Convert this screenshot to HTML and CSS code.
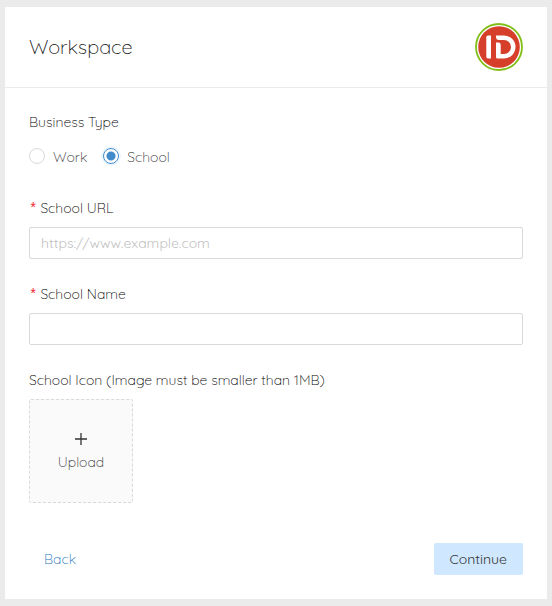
FILE: index.html
```html
<!DOCTYPE html>
<html lang="en">
<head>
<meta charset="utf-8">
<meta name="viewport" content="width=device-width, initial-scale=1">
<title>Workspace</title>
<link rel="stylesheet" href="styles.css">
</head>
<body>
<main class="card">
  <header class="card-header">
    <h1 class="title">Workspace</h1>
    <svg class="logo" viewBox="0 0 48 48" role="img" aria-label="ID">
      <circle cx="24" cy="24" r="23" fill="#fff" stroke="#82bf18" stroke-width="1.8"/>
      <circle cx="24" cy="24" r="20.8" fill="#d6402b"/>
      <path d="M13 12.500h3v23h-3q-1.700 0-1.700-1.700V14.200q0-1.700 1.700-1.700z" fill="#fff"/>
      <path d="M21 12.500h8a11.500 11.500 0 0 1 0 23h-6.500q-1.500 0-1.500-1.500V19.500h2.500q2.200 0 2.200 2.200V31H29a7 7 0 0 0 0-14h-5q-3 0-3-3z" fill="#fff"/>
    </svg>
  </header>
  <form class="form">
    <fieldset class="field">
      <legend class="label">Business Type</legend>
      <div class="options">
        <label class="option"><input class="radio" type="radio" name="type" value="work">Work</label>
        <label class="option"><input class="radio" type="radio" name="type" value="school" checked>School</label>
      </div>
    </fieldset>
    <div class="field">
      <label class="label required" for="url">School URL</label>
      <input class="input" id="url" type="url" placeholder="https://www.example.com">
    </div>
    <div class="field">
      <label class="label required" for="name">School Name</label>
      <input class="input" id="name" type="text">
    </div>
    <div class="field">
      <label class="label" for="upload">School Icon (Image must be smaller than 1MB)</label>
      <button class="upload" id="upload" type="button">
        <svg class="plus" viewBox="0 0 14 14" aria-hidden="true"><path d="M7 1v12M1 7h12" stroke="#333" stroke-width="1.3"/></svg>
        <span>Upload</span>
      </button>
    </div>
    <footer class="actions">
      <button class="button link" type="button">Back</button>
      <button class="button primary" type="submit">Continue</button>
    </footer>
  </form>
</main>
</body>
</html>
```
FILE: styles.css
```css
* {
  box-sizing: border-box;
}

body {
  margin: 0;
  padding: 7px 5px;
  background: #ebebeb;
  color: #333;
  font: 300 14px/22px Quicksand, Lato, sans-serif;
}

button,
input {
  font: inherit;
  color: inherit;
}

.card {
  background: #fff;
}

.card-header {
  display: flex;
  align-items: center;
  justify-content: space-between;
  padding: 16px 24px;
  border-bottom: 1px solid #ebebeb;
}

.title {
  margin: 0;
  color: #111;
  font-size: 20px;
  font-weight: 300;
  line-height: 28px;
}

.logo {
  width: 48px;
  height: 48px;
}

.form {
  display: flex;
  flex-direction: column;
  gap: 24px;
  padding: 23px 24px 24px;
}

.field {
  min-width: 0;
  margin: 0;
  padding: 0;
  border: 0;
}

.label {
  display: block;
  margin-bottom: 8px;
  padding: 0;
  color: #000;
}

.required::before {
  content: "*";
  margin-right: 3px;
  color: #f5222d;
  font-family: "Liberation Mono", monospace;
  font-weight: 400;
  line-height: 1;
}

.options {
  display: flex;
  gap: 16px;
  height: 32px;
}

.option {
  display: flex;
  align-items: center;
  gap: 8px;
}

.radio {
  appearance: none;
  width: 16px;
  height: 16px;
  margin: 0 0 2px;
  border: 1px solid #d9d9d9;
  border-radius: 50%;
  background: #fff;
}

.radio:checked {
  border-color: #428bca;
  background: radial-gradient(circle, #428bca 4px, #fff 5px);
  box-shadow: 0 0 0 2px #edf7ff;
}

.input {
  display: block;
  width: 100%;
  height: 32px;
  padding: 4px 11px;
  border: 1px solid #d9d9d9;
  border-radius: 2px;
  background: #fff;
}

.input::placeholder {
  color: #bfbfbf;
  font-weight: 400;
}

.upload {
  display: flex;
  flex-direction: column;
  align-items: center;
  justify-content: center;
  gap: 5px;
  width: 104px;
  height: 104px;
  padding: 3px 0 0;
  border: 1px dashed #d9d9d9;
  border-radius: 2px;
  background: #fafafa;
}

.plus {
  width: 14px;
  height: 14px;
}

.actions {
  display: flex;
  justify-content: space-between;
  margin-top: 16px;
}

.button {
  height: 32px;
  padding: 0 15px;
  border: 0;
  border-radius: 2px;
}

.link {
  background: none;
  color: #2373ba;
}

.primary {
  padding: 0 16px;
  background: #cfe8ff;
  color: #333;
  font-weight: 400;
}
```
